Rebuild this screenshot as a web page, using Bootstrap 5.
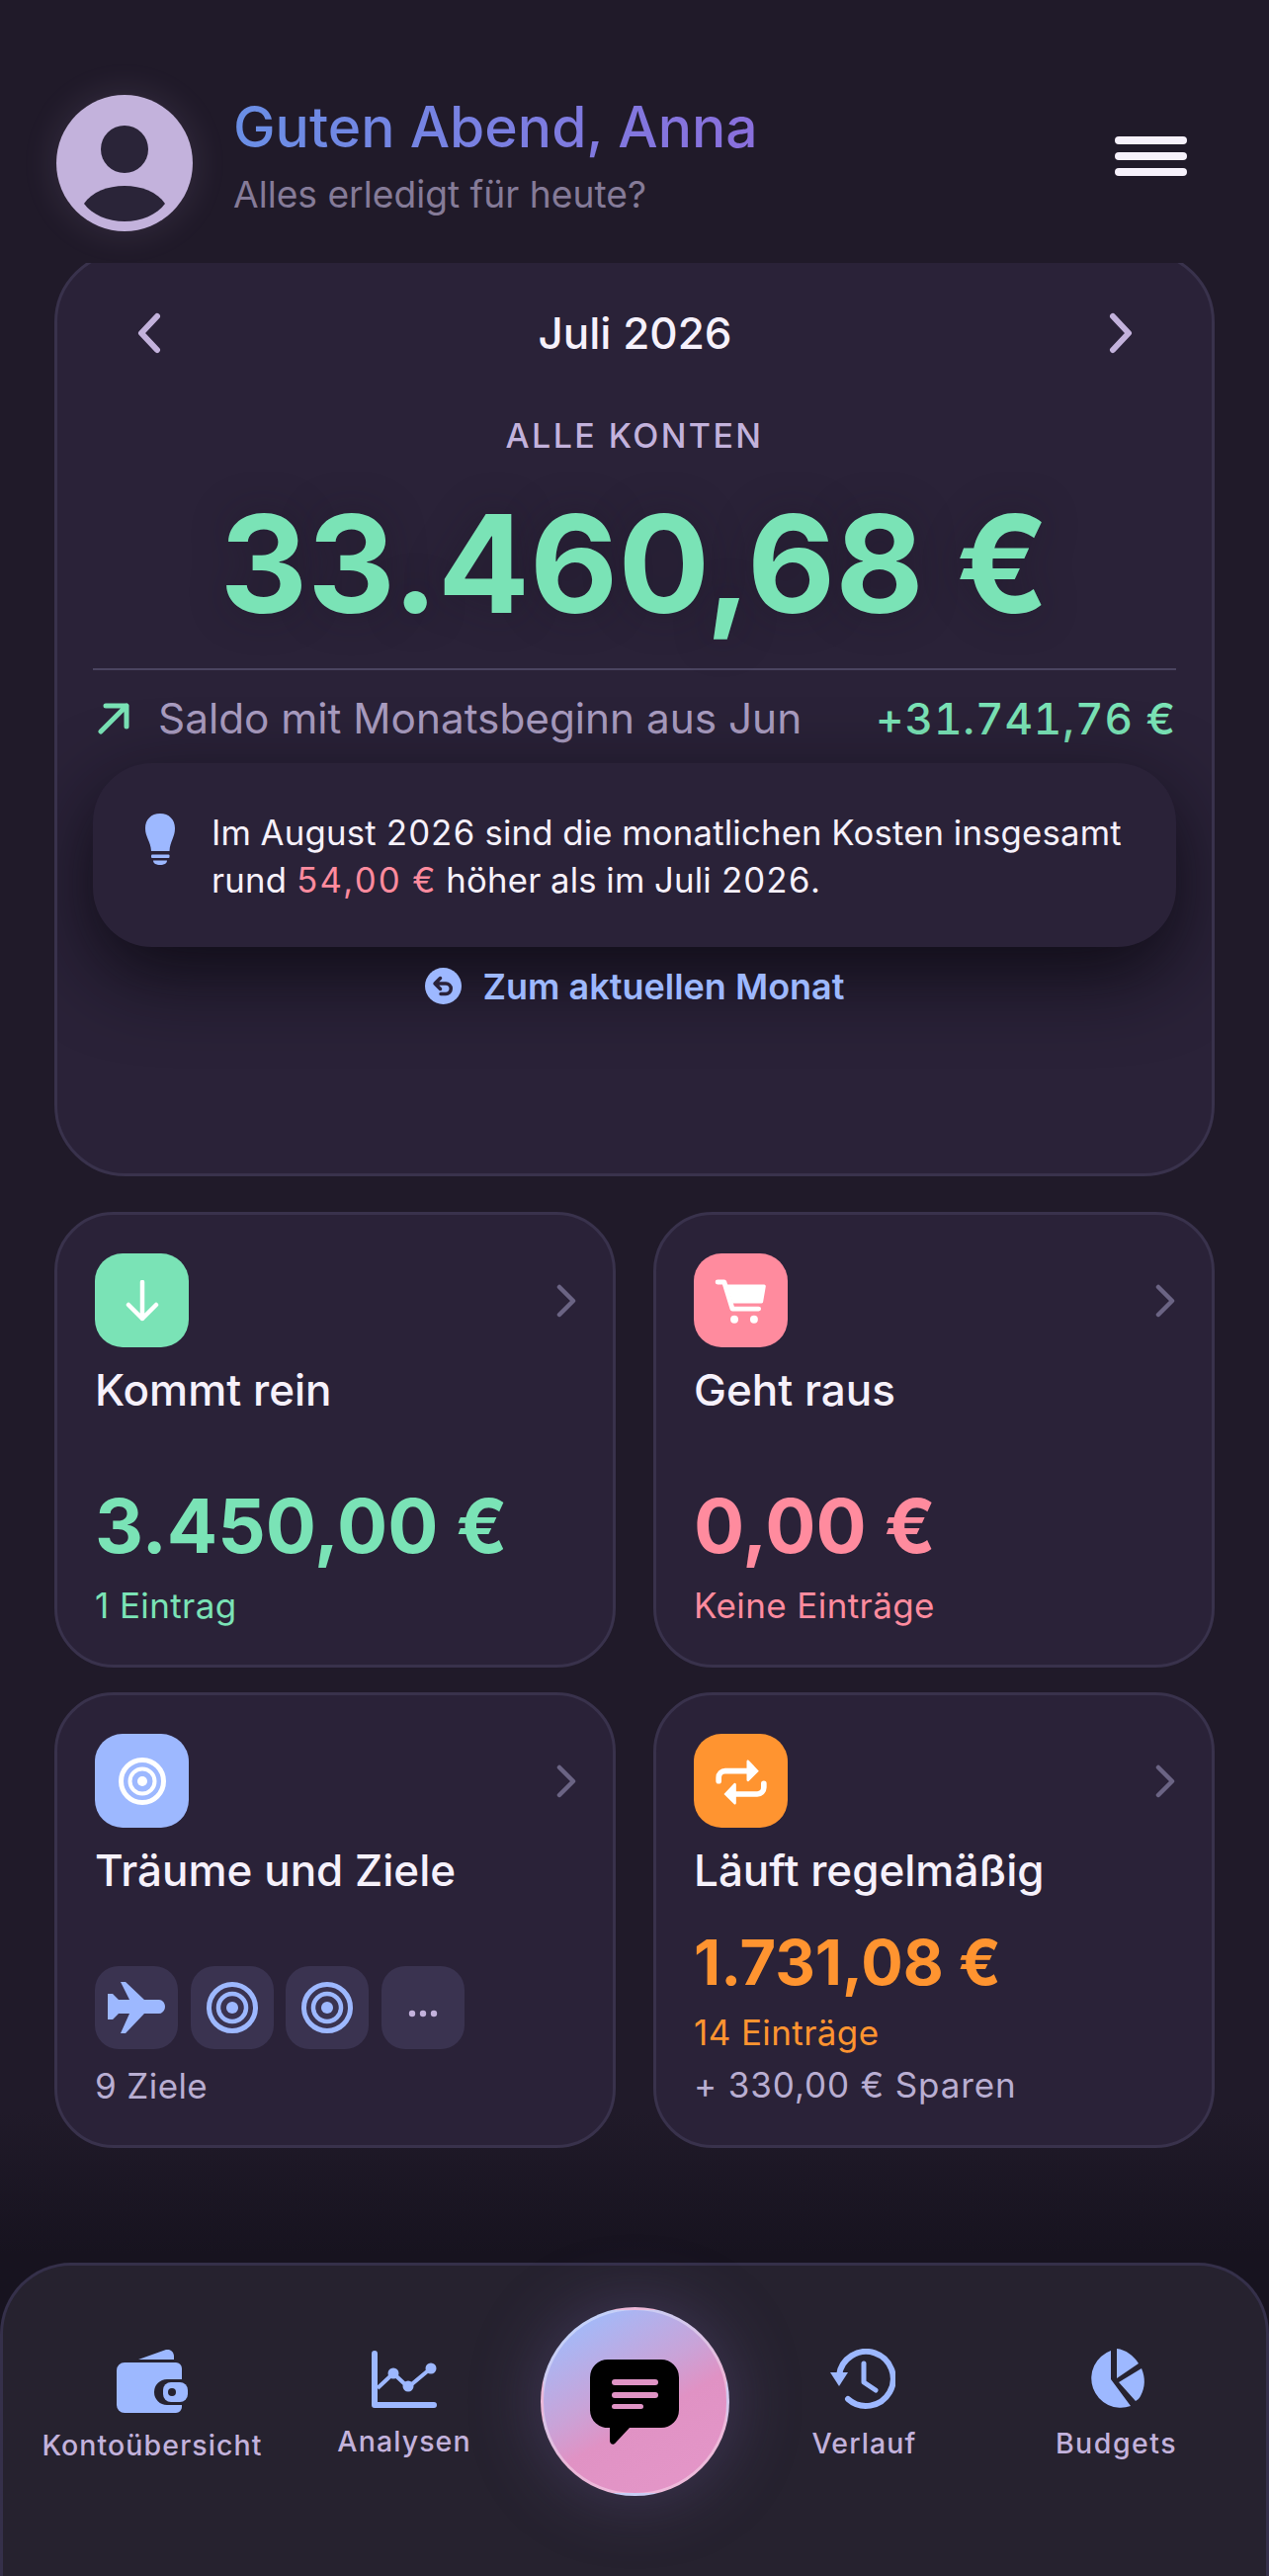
<!doctype html>
<html lang="de"><head><meta charset="utf-8"><title>Finanzen</title>
<link href="https://cdn.jsdelivr.net/npm/bootstrap@5.3.0/dist/css/bootstrap.min.css" rel="stylesheet">
<style>
html,body{height:100%}
body{background:linear-gradient(180deg,#201a29 0,#201a29 82%,#17131f 87.500%,#17131f 100%);font-family:Inter,"Liberation Sans",sans-serif;color:#f6f1fb;overflow:hidden}
.app-page{height:2606px}
.app-head{height:266px;padding:96px 83px 0 57px}
.app-avatar{width:138px;height:138px;border-radius:50%;box-shadow:0 0 36px rgba(195,178,220,.14);flex:none}
.app-avatar svg{display:block}
.app-headtext{margin-left:41px}
.app-hello{font-size:57px;font-weight:500;line-height:64px;background:linear-gradient(90deg,#6a8fe6,#8a6fdc);-webkit-background-clip:text;background-clip:text;color:transparent;margin-top:1px}
.app-sub{font-size:37.200px;line-height:44px;color:#857b98;margin-top:14px}
.app-burger{width:73px;gap:8px;margin-top:42px}
.app-burger span{display:block;height:8px;background:#f6f1fb;border-radius:4px}
.app-clip{height:924px;overflow:hidden;padding:0 55px}
.app-main{height:936px;margin-top:-12px;background:#2a2238;border:3px solid #39324c;border-radius:72px;overflow:hidden;padding:48px 36px 0}
.app-month{height:64px;padding:0 44px 0 45px}
.app-month-t{font-size:44px;font-weight:500;line-height:64px}
.app-alle{font-size:34px;font-weight:500;letter-spacing:2.400px;color:#c3b2dc;line-height:40px;margin-top:52px}
.app-total{font-size:137.500px;font-weight:700;line-height:170px;color:#7ae3b6;text-align:center;margin-top:24px;text-shadow:0 0 40px rgba(26,21,34,.35)}
.app-rule{height:2px;background:#4a4460;margin-top:21px}
.app-saldo{height:62px;margin-top:18px;padding:0 0 0 5px}
.app-saldo-t{font-size:42.300px;color:#a99cc0;margin-left:29px;font-weight:400}
.app-saldo-v{font-size:44px;color:#7ae3b6;font-weight:500;letter-spacing:.9px;font-variant-numeric:tabular-nums}
.app-note{height:186px;margin-top:14px;background:#2a2238;border-radius:60px;box-shadow:0 28px 80px rgba(10,8,16,.85);padding:46px 30px 0 53px;gap:37px;position:relative}
.app-note p{font-size:34.700px;line-height:48px;margin:0;color:#f6f1fb;letter-spacing:.2px;white-space:nowrap;font-variant-numeric:tabular-nums}
.app-red{color:#ff8b9e;letter-spacing:1.500px}
.app-link{margin-top:21px;gap:22px;color:#9db8ff;font-size:36px;font-weight:600;height:37px;position:relative}
.app-grid{display:grid;grid-template-columns:568px 568px;gap:25px 38px;padding:36px 55px 0}
.app-tile{height:461px;background:#2a2238;border:3px solid #39324c;border-radius:60px;padding:39px 38px 0 38px;position:relative}
.app-ico{width:95px;height:95px;border-radius:28px}
.app-tile-top{height:95px}
.app-chev{margin-right:-1px}
.app-tile-t{font-size:44px;font-weight:500;line-height:52px;margin-top:17px}
.app-amt{font-size:76px;font-weight:700;line-height:90px}
.app-cnt{font-size:35px;line-height:44px;letter-spacing:.4px}
.app-green{color:#7ae3b6}.app-pink{color:#ff8b9e}.app-orange{color:#ff9430}.app-mute{color:#b9aed2}
.app-mini{width:84px;height:84px;border-radius:24px;background:#3a3350;flex:none}
.app-nav{height:317px;background:#26222f;border-top:3px solid #35304a;border-left:3px solid #35304a;border-right:3px solid #35304a;border-radius:72px 72px 0 0;margin-top:auto;padding-left:21px;padding-right:25px;display:grid;grid-template-columns:260px 250px 216px 246px 260px;align-items:start}
.app-navi{text-align:center;color:#c3b2dc;font-size:28.500px;font-weight:500;letter-spacing:1.100px;line-height:36px}
.app-navi svg{display:block;margin:0 auto}
.app-fab{width:191px;height:191px;border-radius:50%;margin:42px auto 0;background:linear-gradient(150deg,#a4b9f8 12%,#c9a3d8 42%,#e092c4 58%,#e597c9 100%);border:3px solid rgba(255,255,255,.35);box-shadow:0 0 70px rgba(120,100,170,.35)}
</style></head>
<body>
<div class="app-page d-flex flex-column">
 <header class="app-head d-flex align-items-start">
  <div class="app-avatar"><svg width="138" height="138" viewBox="0 0 138 138"><circle cx="69" cy="69" r="69" fill="#c3b2dc"/><circle cx="69" cy="55" r="24" fill="#2a2438"/><path d="M28 110C36 98 52 92 69 92s33 6 41 18c-8 11-24 18-41 18s-33-7-41-18z" fill="#2a2438"/></svg></div>
  <div class="app-headtext flex-grow-1">
   <div class="app-hello d-inline-block">Guten Abend, Anna</div>
   <div class="app-sub">Alles erledigt für heute?</div>
  </div>
  <div class="app-burger d-flex flex-column"><span></span><span></span><span></span></div>
 </header>
 <div class="app-clip">
  <section class="app-main">
   <div class="app-month d-flex justify-content-between align-items-center">
    <svg width="24" height="42" viewBox="0 0 24 42"><path d="M20 4 4 21l16 17" fill="none" stroke="#c3b2dc" stroke-width="6" stroke-linecap="round" stroke-linejoin="round"/></svg>
    <div class="app-month-t">Juli 2026</div>
    <svg width="24" height="42" viewBox="0 0 24 42"><path d="M4 4l16 17L4 38" fill="none" stroke="#c3b2dc" stroke-width="6" stroke-linecap="round" stroke-linejoin="round"/></svg>
   </div>
   <div class="app-alle text-center">ALLE KONTEN</div>
   <div class="app-total">33.460,68 €</div>
   <div class="app-rule"></div>
   <div class="app-saldo d-flex align-items-center">
    <svg width="32" height="32" viewBox="0 0 32 32"><path d="M3 29 29 3M8 3h21v21" fill="none" stroke="#7ae3b6" stroke-width="5" stroke-linecap="round" stroke-linejoin="round"/></svg>
    <span class="app-saldo-t">Saldo mit Monatsbeginn aus Jun</span>
    <span class="app-saldo-v ms-auto">+31.741,76 €</span>
   </div>
   <div class="app-note d-flex align-items-start">
    <svg width="30" height="52" viewBox="0 0 30 52" style="flex:none;margin-top:5px"><path d="M15 0C24 0 30 6 30 15c0 9-5 13-5.500 23H6C5.500 28 0 24 0 15 0 6 6 0 15 0z" fill="#9db8ff"/><rect x="6" y="41.500" width="18.500" height="3.500" rx="1" fill="#9db8ff"/><path d="M8 47.500h14c0 3-3 4.500-7 4.500s-7-1.500-7-4.500z" fill="#9db8ff"/></svg>
    <p>Im August 2026 sind die monatlichen Kosten insgesamt<br>rund <span class="app-red">54,00 €</span> höher als im Juli 2026.</p>
   </div>
   <div class="app-link d-flex justify-content-center align-items-center">
    <svg width="37" height="37" viewBox="0 0 37 37"><circle cx="18.500" cy="18.500" r="18.500" fill="#9db8ff"/><path d="M10 16h11a5.200 5.200 0 0 1 0 10.500h-5M15.500 10.500 10 16l5.500 5.500" fill="none" stroke="#2a2238" stroke-width="3.500" stroke-linecap="round" stroke-linejoin="round"/></svg>
    <span>Zum aktuellen Monat</span>
   </div>
  </section>
 </div>
 <div class="app-grid">
  <article class="app-tile">
   <div class="app-tile-top d-flex justify-content-between align-items-center">
    <div class="app-ico d-flex align-items-center justify-content-center" style="background:#7ae3b6"><svg width="34" height="42" viewBox="0 0 34 42"><path d="M17 2v37M3 25l14 14 14-14" fill="none" stroke="#fff" stroke-width="4.500" stroke-linecap="round" stroke-linejoin="round"/></svg></div>
    <svg class="app-chev" width="20" height="34" viewBox="0 0 20 34"><path d="M3 3l14 14L3 31" fill="none" stroke="#6b6484" stroke-width="4.500" stroke-linecap="round" stroke-linejoin="round"/></svg>
   </div>
   <div class="app-tile-t">Kommt rein</div>
   <div class="app-amt app-green" style="margin-top:66px">3.450,00 €</div>
   <div class="app-cnt app-green" style="margin-top:14px">1 Eintrag</div>
  </article>
  <article class="app-tile">
   <div class="app-tile-top d-flex justify-content-between align-items-center">
    <div class="app-ico d-flex align-items-center justify-content-center" style="background:#ff8b9e"><svg width="55" height="48" viewBox="95 95 165 145"><path d="M107 110h20l25 82h80" fill="none" stroke="#fff" stroke-width="15" stroke-linecap="round" stroke-linejoin="round"/><path d="M135 118h114a5 5 0 0 1 5 5l-8 47a5 5 0 0 1-5 5h-88z" fill="#fff"/><circle cx="158" cy="224" r="12" fill="#fff"/><circle cx="218" cy="224" r="12" fill="#fff"/></svg></div>
    <svg class="app-chev" width="20" height="34" viewBox="0 0 20 34"><path d="M3 3l14 14L3 31" fill="none" stroke="#6b6484" stroke-width="4.500" stroke-linecap="round" stroke-linejoin="round"/></svg>
   </div>
   <div class="app-tile-t">Geht raus</div>
   <div class="app-amt app-pink" style="margin-top:66px">0,00 €</div>
   <div class="app-cnt app-pink" style="margin-top:14px">Keine Einträge</div>
  </article>
  <article class="app-tile">
   <div class="app-tile-top d-flex justify-content-between align-items-center">
    <div class="app-ico d-flex align-items-center justify-content-center" style="background:#9db8ff"><svg width="48" height="48" viewBox="0 0 48 48"><circle cx="24" cy="24" r="21.500" fill="none" stroke="#fff" stroke-width="5"/><circle cx="24" cy="24" r="12.500" fill="none" stroke="#fff" stroke-width="4"/><circle cx="24" cy="24" r="5" fill="#fff"/></svg></div>
    <svg class="app-chev" width="20" height="34" viewBox="0 0 20 34"><path d="M3 3l14 14L3 31" fill="none" stroke="#6b6484" stroke-width="4.500" stroke-linecap="round" stroke-linejoin="round"/></svg>
   </div>
   <div class="app-tile-t">Träume und Ziele</div>
   <div class="d-flex" style="gap:12.500px;margin-top:71px">
    <div class="app-mini d-flex align-items-center justify-content-center"><svg width="58" height="52" viewBox="0 0 58 52"><path d="M13 0h5l19 18h15c3 0 6 3 6 7s-3 7-6 7H37L18 52h-5l9-20H11l-6 6H0V12h5l6 6h11z" fill="#9db8ff"/></svg></div>
    <div class="app-mini d-flex align-items-center justify-content-center"><svg width="52" height="52" viewBox="0 0 52 52"><circle cx="26" cy="26" r="23.500" fill="none" stroke="#9db8ff" stroke-width="5"/><circle cx="26" cy="26" r="14" fill="none" stroke="#9db8ff" stroke-width="4.500"/><circle cx="26" cy="26" r="6" fill="#9db8ff"/></svg></div>
    <div class="app-mini d-flex align-items-center justify-content-center"><svg width="52" height="52" viewBox="0 0 52 52"><circle cx="26" cy="26" r="23.500" fill="none" stroke="#9db8ff" stroke-width="5"/><circle cx="26" cy="26" r="14" fill="none" stroke="#9db8ff" stroke-width="4.500"/><circle cx="26" cy="26" r="6" fill="#9db8ff"/></svg></div>
    <div class="app-mini d-flex align-items-center justify-content-center"><svg width="30" height="8" viewBox="0 0 30 8" style="margin-top:12px"><circle cx="4" cy="4" r="3.200" fill="#c3b2dc"/><circle cx="15" cy="4" r="3.200" fill="#c3b2dc"/><circle cx="26" cy="4" r="3.200" fill="#c3b2dc"/></svg></div>
   </div>
   <div class="app-cnt app-mute" style="margin-top:15px">9 Ziele</div>
  </article>
  <article class="app-tile">
   <div class="app-tile-top d-flex justify-content-between align-items-center">
    <div class="app-ico d-flex align-items-center justify-content-center" style="background:#ff9430"><svg width="55" height="50" viewBox="97.500 96 165 150"><path d="M113 170v-10a20 20 0 0 1 20-20h75M250 178v12a20 20 0 0 1-20 20h-70" fill="none" stroke="#fff" stroke-width="17" stroke-linecap="round"/><path d="M198 110a4 4 0 0 1 6-3l31 33-31 31a4 4 0 0 1-6-3zM166 180a4 4 0 0 0-6-3l-31 33 31 31a4 4 0 0 0 6-3z" fill="#fff"/></svg></div>
    <svg class="app-chev" width="20" height="34" viewBox="0 0 20 34"><path d="M3 3l14 14L3 31" fill="none" stroke="#6b6484" stroke-width="4.500" stroke-linecap="round" stroke-linejoin="round"/></svg>
   </div>
   <div class="app-tile-t">Läuft regelmäßig</div>
   <div class="app-amt app-orange" style="font-size:63px;line-height:72px;margin-top:31px">1.731,08 €</div>
   <div class="app-cnt app-orange" style="margin-top:13px">14 Einträge</div>
   <div class="app-cnt app-mute" style="margin-top:9px;letter-spacing:.9px">+ 330,00 € Sparen</div>
  </article>
 </div>
 <nav class="app-nav">
  <div class="app-navi" style="padding-top:85px"><svg width="72" height="64" viewBox="0 0 72 64"><path d="M22 10 50 0c5-1 8 3 8 7v3z" fill="#9db8ff"/><path d="M8 13h52a6 6 0 0 1 6 6v11H51a13 13 0 0 0 0 26h15v2a6 6 0 0 1-6 6H8a8 8 0 0 1-8-8V21a8 8 0 0 1 8-8z" fill="#9db8ff"/><rect x="47" y="33" width="25" height="20" rx="8" fill="#9db8ff"/><circle cx="56" cy="43" r="4" fill="#26222f"/></svg><div style="margin-top:15px">Kontoübersicht</div></div>
  <div class="app-navi" style="padding-top:86px"><svg width="66" height="58" viewBox="0 0 66 58"><path d="M3 3v52h60" fill="none" stroke="#9db8ff" stroke-width="6" stroke-linecap="round" stroke-linejoin="round"/><path d="M6 38l16-15 15 14 24-20" fill="none" stroke="#9db8ff" stroke-width="4"/><circle cx="22" cy="23" r="5.500" fill="#9db8ff"/><circle cx="37" cy="36" r="5.500" fill="#9db8ff"/><circle cx="60" cy="18" r="5.500" fill="#9db8ff"/></svg><div style="margin-top:16px">Analysen</div></div>
  <div><div class="app-fab d-flex align-items-center justify-content-center"><svg width="90" height="86" viewBox="0 0 90 86"><path d="M18 0h54a18 18 0 0 1 18 18v33a18 18 0 0 1-18 18H40L26 84c-2 3-6 2-6-2V69A18 18 0 0 1 0 51V18A18 18 0 0 1 18 0z" fill="#000"/><rect x="22" y="20" width="47" height="6" rx="3" fill="#df93c5"/><rect x="22" y="33" width="47" height="6" rx="3" fill="#df93c5"/><rect x="22" y="45" width="32" height="5" rx="2.500" fill="#df93c5"/></svg></div></div>
  <div class="app-navi" style="padding-top:84px"><svg width="66" height="62" viewBox="0 0 66 62"><path d="M9 27A27.500 27.500 0 1 1 18 51" fill="none" stroke="#9db8ff" stroke-width="6" stroke-linecap="round"/><path d="M0 24h18l-9 14z" fill="#9db8ff"/><path d="M34 15v19l12 8" fill="none" stroke="#9db8ff" stroke-width="5" stroke-linecap="round" stroke-linejoin="round"/></svg><div style="margin-top:16px;padding-left:3px">Verlauf</div></div>
  <div class="app-navi ps-1" style="padding-top:84px"><svg width="62" height="62" viewBox="0 0 62 62"><path d="M27 2v29l20 27A29 29 0 1 1 27 2z" fill="#9db8ff"/><path d="M33 0c9 1 17 7 22 15L33 30z" fill="#9db8ff"/><path d="M58 20c4 9 4 19-1 28-1 2-3 4-5 5L35 34z" fill="#9db8ff"/></svg><div style="margin-top:16px;letter-spacing:1.500px;padding-left:3px">Budgets</div></div>
 </nav>
</div>
</body></html>
